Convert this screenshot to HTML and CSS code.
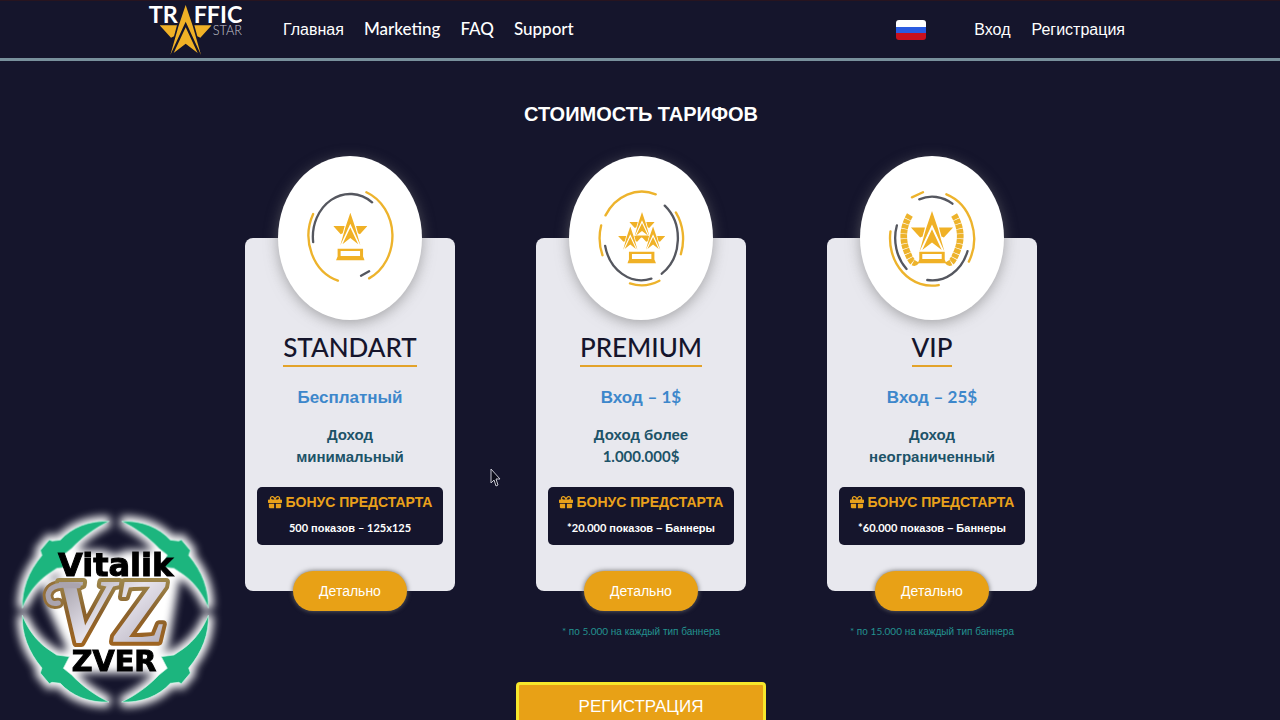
FILE: index.html
```html
<!DOCTYPE html>
<html lang="ru">
<head>
<meta charset="utf-8">
<meta name="viewport" content="width=device-width, initial-scale=1">
<title>Traffic Star</title>
<link rel="stylesheet" href="styles.css">
</head>
<body>
<svg class="defs" aria-hidden="true">
  <symbol id="star" viewBox="0 0 156 150">
    <path d="M0 61H52L43 94L34 98ZM156 61H104L113 94L122 98Z"/>
    <path d="M78 0L100 65L124 150L78 50L32 150L56 65Z"/>
    <path d="M78 67L114 144L78 116L42 144Z"/>
  </symbol>
  <symbol id="plinth" viewBox="0 0 86 36">
    <path fill-rule="evenodd" d="M5 0H81V24L86 36H0L5 24ZM14 7V22H72V7Z"/>
  </symbol>
  <symbol id="gift" viewBox="0 0 512 512">
    <path d="M32 448c0 17.700 14.300 32 32 32h160V320H32v128zm256 32h160c17.700 0 32-14.300 32-32V320H288v160zm192-320h-42.100c6.200-12.100 10.100-25.500 10.100-40 0-48.500-39.500-88-88-88-41.600 0-68.500 21.300-103 68.300-34.500-47-61.400-68.300-103-68.300-48.500 0-88 39.500-88 88 0 14.500 3.800 27.900 10.100 40H32c-17.700 0-32 14.300-32 32v80c0 8.800 7.200 16 16 16h480c8.800 0 16-7.200 16-16v-80c0-17.700-14.300-32-32-32zm-326.100 0c-22.100 0-40-17.900-40-40s17.900-40 40-40c19.900 0 34.600 3.300 86.100 80h-86.100zm206.100 0h-86.100c51.400-76.500 65.700-80 86.100-80 22.100 0 40 17.900 40 40s-17.900 40-40 40z"/>
  </symbol>
</svg>

<header class="header">
  <div class="header-inner">
    <a class="logo" href="#" aria-label="Traffic Star">
      <svg width="94" height="54" viewBox="0 0 282 162">
        <g class="logo-name"><text x="2" y="60">TR</text><text x="137" y="60">FFIC</text></g>
        <text class="logo-sub" x="194" y="97">STAR</text>
        <use href="#star" x="35" y="6" width="156" height="150" class="gold"/>
      </svg>
    </a>
    <nav class="nav">
      <a href="#">Главная</a>
      <a href="#" class="latin">Marketing</a>
      <a href="#" class="latin">FAQ</a>
      <a href="#" class="latin">Support</a>
    </nav>
    <div class="account">
      <button class="flag" type="button" aria-label="Русский"></button>
      <a href="#">Вход</a>
      <a href="#">Регистрация</a>
    </div>
  </div>
</header>

<main>
  <h1 class="title">СТОИМОСТЬ ТАРИФОВ</h1>
  <div class="plans">
    <article class="plan">
      <div class="card">
        <div class="medal">
          <svg viewBox="117 33 430 489" aria-hidden="true">
            <g class="ring"><path d="M222 206A125 141 0 0 0 296 405M381 141A125 141 0 0 1 389 398"/><path class="dark" d="M222 290A111 128 0 0 1 398 171M365 390L389 377"/></g>
            <g class="gold"><use href="#star" x="282" y="202" width="102" height="98"/><use href="#plinth" x="290" y="309" width="86" height="36"/></g>
          </svg>
        </div>
        <h2 class="name">STANDART</h2>
        <p class="price">Бесплатный</p>
        <p class="income">Доход<br>минимальный</p>
        <div class="bonus">
          <h3><svg class="gift"><use href="#gift"/></svg>БОНУС ПРЕДСТАРТА</h3>
          <p><span class="latin">500</span> показов <span class="latin">– 125x125</span></p>
        </div>
        <button class="details" type="button">Детально</button>
      </div>
    </article>

    <article class="plan">
      <div class="card">
        <div class="medal">
          <svg viewBox="117 33 430 489" aria-hidden="true">
            <g class="ring"><path d="M226 210A125 141 0 0 1 376 147M213 240A125 141 0 0 0 217 329M436 201A125 141 0 0 1 451 326M299 413A125 141 0 0 0 387 405"/><path class="dark" d="M403 181A111 128 0 0 1 394 384M225 301A111 128 0 0 0 363 399"/></g>
            <g class="gold"><use href="#star" x="297" y="200" width="76" height="73"/><use href="#star" x="262" y="243" width="76" height="70"/><use href="#star" x="330" y="243" width="76" height="70"/><path d="M316 270H354V276H316Z"/><use href="#plinth" x="291" y="318" width="86" height="36"/></g>
          </svg>
        </div>
        <h2 class="name">PREMIUM</h2>
        <p class="price">Вход <span class="latin">– 1$</span></p>
        <p class="income">Доход более<br><span class="latin">1.000.000$</span></p>
        <div class="bonus">
          <h3><svg class="gift"><use href="#gift"/></svg>БОНУС ПРЕДСТАРТА</h3>
          <p><span class="latin">*20.000</span> показов – Баннеры</p>
        </div>
        <button class="details" type="button">Детально</button>
      </div>
      <p class="note"><span class="latin">* </span>по <span class="latin">5.000</span> на каждый тип баннера</p>
    </article>

    <article class="plan">
      <div class="card">
        <div class="medal">
          <svg viewBox="119 33 430 489" aria-hidden="true">
            <g class="ring"><path d="M274 156L307 141M377 147A125 141 0 0 1 444 348M210 258A125 141 0 0 0 354 418"/><path class="dark" d="M296 162A111 128 0 0 1 395 175M229 240A111 128 0 0 0 258 370M320 403A111 128 0 0 0 440 317"/></g>
            <g class="laurel"><path d="M268 209Q238 260 257 312T287 346"/><path d="M400 209Q430 260 411 312T381 346"/></g>
            <g class="gold"><use href="#star" x="271" y="197" width="126" height="121"/><use href="#plinth" x="291" y="318" width="86" height="36"/></g>
          </svg>
        </div>
        <h2 class="name">VIP</h2>
        <p class="price">Вход <span class="latin">– 25$</span></p>
        <p class="income">Доход<br>неограниченный</p>
        <div class="bonus">
          <h3><svg class="gift"><use href="#gift"/></svg>БОНУС ПРЕДСТАРТА</h3>
          <p><span class="latin">*60.000</span> показов – Баннеры</p>
        </div>
        <button class="details" type="button">Детально</button>
      </div>
      <p class="note"><span class="latin">* </span>по <span class="latin">15.000</span> на каждый тип баннера</p>
    </article>
  </div>
  <button class="register" type="button">РЕГИСТРАЦИЯ</button>
</main>

<svg class="watermark" viewBox="0 0 690 645" role="img" aria-label="Vitalik VZ Zver">
  <defs>
    <filter id="glow" x="-20%" y="-20%" width="140%" height="140%"><feGaussianBlur stdDeviation="13"/></filter>
    <linearGradient id="goldEdge" x1="0" y1="0" x2="0" y2="1"><stop offset="0" stop-color="#a79a5c"/><stop offset=".5" stop-color="#8b622d"/><stop offset="1" stop-color="#a8651a"/></linearGradient>
    <linearGradient id="silver" x1="0" y1="0" x2="1" y2="1"><stop offset="0" stop-color="#8c8791"/><stop offset=".5" stop-color="#e6e3ec"/><stop offset="1" stop-color="#a9a4b2"/></linearGradient>
    <path id="blade" d="M327 49C270 46 216 66 181 105L156 108L148 104L121 136L126 151C84 200 65 255 67 309C82 270 108 233 142 209L170 190L208 185L190 150L215 130C248 96 283 70 327 49Z"/>
    <g id="blades"><use href="#blade"/><use href="#blade" transform="matrix(-1 0 0 1 692 0)"/><use href="#blade" transform="matrix(1 0 0 -1 0 640)"/><use href="#blade" transform="matrix(-1 0 0 -1 692 640)"/></g>
  </defs>
  <g filter="url(#glow)" fill="#fff" stroke="#fff">
    <use href="#blades" stroke-width="30"/>
    <path stroke-width="10" d="M180 140H310L345 155L380 140H520V210H535L500 425H485V500H205V430L140 290V230H180Z"/>
  </g>
  <use href="#blades" fill="#1cb57e" stroke="#c9f3e2" stroke-width="2"/>
  <path class="curl-edge" d="M235 242H205Q150 236 144 270Q146 302 175 294"/>
  <text x="160" y="412" class="mono">VZ</text>
  <path class="curl-face" d="M235 242H205Q150 236 144 270Q146 302 175 294"/>
  <text class="mark-text" x="347" y="212" font-size="96">Vitalik</text>
  <text class="mark-text" x="342" y="499" font-size="86">ZVER</text>
</svg>
<svg class="cursor" width="11" height="19" viewBox="0 0 11 19" aria-hidden="true"><path d="M1 1V15L4 12L6 18L8 17L6 11H10Z"/></svg>
</body>
</html>
```
FILE: styles.css
```css
* { box-sizing: border-box; }
html { scrollbar-width: none; }
body {
  margin: 0;
  background: #15152c;
  color: #fff;
  font-family: "Liberation Sans", Arial, sans-serif;
  font-size: 16px;
}
h1, h2, h3, p { margin: 0; }
a { color: inherit; text-decoration: none; }
button { font-family: inherit; cursor: pointer; }
.latin, .name { font-family: Lato, "Open Sans", sans-serif; }
span.latin { line-height: 1; }
.defs { position: absolute; width: 0; height: 0; }
.gold { fill: #f0b126; }

.header { border-top: 1px solid #28141f; border-bottom: 3px solid #78909c; }
.header-inner {
  display: flex;
  align-items: center;
  height: 57px;
  padding: 0 155px 0 148px;
}
.logo { display: flex; margin-right: 41px; }
.logo svg { display: block; }
.logo-name { fill: #fff; font: bold 70px Lato, sans-serif; }
.logo-sub { fill: #c9c9d3; font: 300 38px Lato, sans-serif; }
.nav { display: flex; align-items: baseline; gap: 20px; }
.nav .latin { font-size: 17px; font-weight: 500; line-height: 1; }
.account { display: flex; align-items: center; gap: 21px; margin-left: auto; }
.flag {
  width: 30px;
  height: 20px;
  margin-right: 27px;
  padding: 0;
  border: 0;
  border-radius: 3px;
  background: linear-gradient(#fff 33%, #2a5be0 33% 66%, #c9101c 66%);
}

main { display: flex; flex-direction: column; align-items: center; padding: 38px 20px 40px 22px; }
.title { font-size: 20px; line-height: 30px; font-weight: bold; }
.plans {
  display: grid;
  grid-template-columns: repeat(3, 210px);
  justify-content: center;
  gap: 81px;
  margin-top: 109px;
}
.plan { text-align: center; }
.card {
  display: flex;
  flex-direction: column;
  align-items: center;
  padding: 0 12px;
  border-radius: 8px;
  background: #e8e8ee;
}
.medal {
  width: 144px;
  height: 164px;
  margin-top: -82px;
  border-radius: 50%;
  background: #fff;
  box-shadow: 0 3px 14px #77777799;
}
.medal svg { display: block; width: 100%; height: 100%; }
.ring { fill: none; stroke: #edb32c; stroke-width: 7; stroke-linecap: round; }
.dark { stroke: #55575f; }
.laurel { fill: none; stroke: #edb32c; stroke-width: 20; stroke-dasharray: 13 2; }
.name {
  margin-top: 9px;
  border-bottom: 2px solid #e3a32a;
  color: #15152c;
  font-size: 26px;
  line-height: 36px;
  font-weight: 500;
}
.price { margin-top: 17px; color: #3d87cb; font-size: 17px; line-height: 28px; font-weight: bold; }
.income { margin-top: 12px; color: #1d5368; font-size: 15px; line-height: 22px; font-weight: bold; }
.bonus {
  align-self: stretch;
  margin-top: 19px;
  padding: 5px 0 7px;
  border-radius: 5px;
  background: #15152c;
  white-space: nowrap;
}
.bonus h3 {
  display: flex;
  justify-content: center;
  align-items: center;
  gap: 4px;
  color: #e9a11b;
  font-size: 14px;
  line-height: 20px;
}
.gift { width: 14px; height: 14px; fill: currentColor; }
.bonus p { margin-top: 6px; font-size: 11px; line-height: 20px; font-weight: bold; }
.details {
  width: 114px;
  height: 40px;
  margin: 26px 0 -20px;
  padding: 0;
  border: 0;
  border-radius: 20px;
  background: #e8a116;
  box-shadow: 0 0 5px #666;
  color: #fff;
  font-size: 14px;
}
.note { margin-top: 31px; color: #23928f; font-size: 10px; line-height: 20px; white-space: nowrap; }
.register {
  width: 250px;
  height: 50px;
  margin-top: 40px;
  border: 3px solid #f7e72b;
  border-radius: 4px;
  background: #e8a116;
  color: #fff;
  font-size: 17px;
}

.watermark { position: fixed; left: 0; bottom: 0; width: 230px; height: 215px; pointer-events: none; }
.mark-text { font-family: "DejaVu Sans", sans-serif; font-weight: bold; text-anchor: middle; stroke: #000; stroke-width: 3; }
.mono {
  font: italic bold 270px "Liberation Serif", serif;
  fill: url(#silver);
  stroke: url(#goldEdge);
  stroke-width: 24;
  stroke-linejoin: round;
  paint-order: stroke;
}
.curl-edge { fill: none; stroke: #947039; stroke-width: 32; stroke-linecap: round; }
.curl-face { fill: none; stroke: #aaa4ae; stroke-width: 15; stroke-linecap: round; }
.cursor { position: fixed; left: 490px; top: 468px; fill: #0b0b18; stroke: #c8c8d2; pointer-events: none; }
```
